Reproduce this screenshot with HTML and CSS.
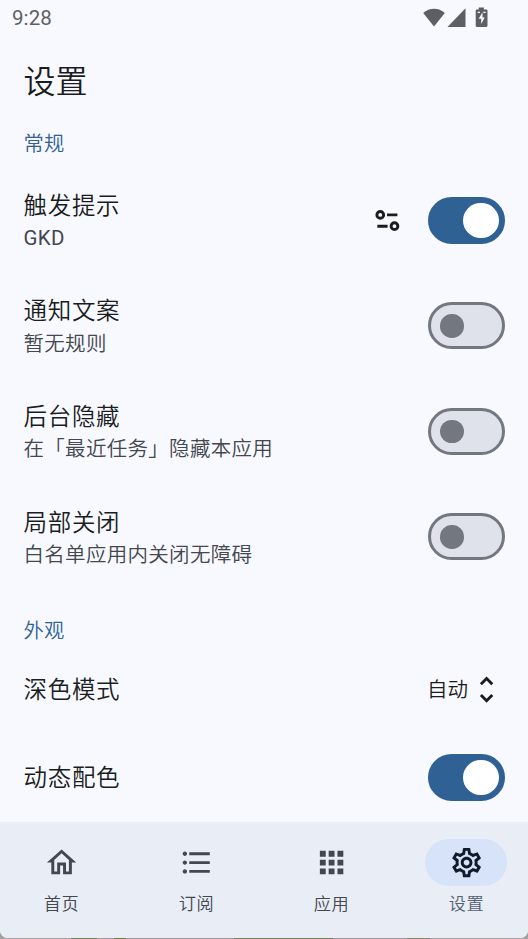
FILE: index.html
```html
<!DOCTYPE html>
<html lang="zh-CN">
<head>
<meta charset="utf-8">
<title>设置</title>
<link rel="stylesheet" href="styles.css">
</head>
<body>
<div class="screen">
  <header class="status">
    <span class="clock latin">9:28</span>
    <svg class="status-icons" viewBox="0 0 66 22" width="66" height="22">
      <path d="M.2 6C6 .2 16 .2 21.800 6L11 19.600z"/>
      <path d="M42.500 1.300v18.600H24.500z"/>
      <path d="M55.700.5h5.200v2h2.400c.7 0 1.200.5 1.200 1.200v15c0 .7-.5 1.200-1.200 1.200h-9.400c-.7 0-1.200-.5-1.200-1.200v-15c0-.7.5-1.200 1.200-1.200h1.800z"/>
      <path class="bolt" d="M54.700 4.800h2.300v1.300h-2.300zM60.300 4.800h2.300v1.300h-2.300zM59.500 5.300v5.100h2.200l-3.500 6.500v-5.100h-2.500z"/>
    </svg>
  </header>
  <h1 class="title">设置</h1>
  <main class="list">
    <h2 class="section">常规</h2>
    <div class="row">
      <div class="text"><div class="name">触发提示</div><div class="summary latin">GKD</div></div>
      <svg class="icon tune" viewBox="0 0 24 24"><g fill="none" stroke="currentColor" stroke-width="2"><circle cx="7" cy="8.100" r="2.300"/><circle cx="16.700" cy="15.800" r="2.300"/><path d="M11.600 8.100H18.700M5 15.800h7"/></g></svg>
      <div class="switch on"></div>
    </div>
    <div class="row">
      <div class="text"><div class="name">通知文案</div><div class="summary">暂无规则</div></div>
      <div class="switch"></div>
    </div>
    <div class="row">
      <div class="text"><div class="name">后台隐藏</div><div class="summary">在「最近任务」隐藏本应用</div></div>
      <div class="switch"></div>
    </div>
    <div class="row">
      <div class="text"><div class="name">局部关闭</div><div class="summary">白名单应用内关闭无障碍</div></div>
      <div class="switch"></div>
    </div>
    <h2 class="section second">外观</h2>
    <div class="row short">
      <div class="text"><div class="name">深色模式</div></div>
      <span class="value">自动</span>
      <svg class="icon" viewBox="0 0 24 24"><path d="M12 5.830 15.170 9l1.410-1.410L12 3 7.410 7.590 8.830 9 12 5.830zm0 12.340L8.830 15l-1.410 1.410L12 21l4.590-4.590L15.170 15 12 18.170z"/></svg>
    </div>
    <div class="row short">
      <div class="text"><div class="name">动态配色</div></div>
      <div class="switch on"></div>
    </div>
  </main>
  <nav class="nav">
    <div class="tab">
      <div class="pill"><svg class="icon" viewBox="0 0 24 24"><path d="m12 5.690 5 4.500V18h-2v-6H9v6H7v-7.810l5-4.500M12 3 2 12h3v8h6v-6h2v6h6v-8h3L12 3z"/></svg></div>
      <span class="label">首页</span>
    </div>
    <div class="tab">
      <div class="pill"><svg class="icon" viewBox="0 0 24 24"><path d="M4 10.500c-.83 0-1.500.67-1.500 1.500s.67 1.500 1.500 1.500 1.500-.67 1.500-1.500-.67-1.500-1.500-1.500zm0-6c-.83 0-1.500.67-1.500 1.500S3.170 7.500 4 7.500 5.500 6.830 5.500 6 4.830 4.500 4 4.500zm0 12c-.83 0-1.500.68-1.500 1.500s.68 1.500 1.500 1.500 1.500-.68 1.500-1.500-.67-1.500-1.500-1.500zM7 19h14v-2H7v2zm0-6h14v-2H7v2zm0-8v2h14V5H7z"/></svg></div>
      <span class="label">订阅</span>
    </div>
    <div class="tab">
      <div class="pill"><svg class="icon" viewBox="0 0 24 24"><path d="M4 8h4V4H4v4zm6 12h4v-4h-4v4zm-6 0h4v-4H4v4zm0-6h4v-4H4v4zm6 0h4v-4h-4v4zm6-10v4h4V4h-4zm-6 4h4V4h-4v4zm6 6h4v-4h-4v4zm0 6h4v-4h-4v4z"/></svg></div>
      <span class="label">应用</span>
    </div>
    <div class="tab active">
      <div class="pill"><svg class="icon" viewBox="0 0 24 24"><path d="M19.430 12.980c.04-.32.07-.64.07-.98 0-.34-.03-.66-.07-.98l2.110-1.650c.19-.15.24-.42.12-.64l-2-3.460c-.09-.16-.26-.25-.44-.25-.06 0-.12.01-.17.03l-2.490 1c-.52-.4-1.080-.73-1.690-.98l-.38-2.650C14.460 2.180 14.250 2 14 2h-4c-.25 0-.46.18-.49.42l-.38 2.650c-.61.25-1.170.59-1.690.98l-2.490-1c-.06-.02-.12-.03-.18-.03-.17 0-.34.09-.43.25l-2 3.460c-.13.22-.07.49.12.64l2.110 1.650c-.04.32-.07.65-.07.98 0 .33.03.66.07.98l-2.110 1.650c-.19.15-.24.42-.12.64l2 3.460c.09.16.26.25.44.25.06 0 .12-.01.17-.03l2.490-1c.52.4 1.080.73 1.690.98l.38 2.650c.03.24.24.42.49.42h4c.25 0 .46-.18.49-.42l.38-2.650c.61-.25 1.170-.59 1.690-.98l2.490 1c.06.02.12.03.18.03.17 0 .34-.09.43-.25l2-3.460c.12-.22.07-.49-.12-.64l-2.110-1.650zm-1.980-1.710c.04.31.05.52.05.73 0 .21-.02.43-.05.73l-.14 1.130.89.7 1.080.84-.7 1.210-1.270-.51-1.040-.42-.9.68c-.43.32-.84.56-1.250.73l-1.060.43-.16 1.130-.2 1.350h-1.400l-.19-1.350-.16-1.130-1.060-.43c-.43-.18-.83-.41-1.230-.71l-.91-.7-1.060.43-1.270.51-.7-1.210 1.080-.84.89-.7-.14-1.130c-.03-.31-.05-.54-.05-.74s.02-.43.05-.73l.14-1.130-.89-.7-1.080-.84.7-1.210 1.270.51 1.040.42.9-.68c.43-.32.84-.56 1.250-.73l1.060-.43.16-1.130.2-1.350h1.390l.19 1.350.16 1.130 1.060.43c.43.18.83.41 1.230.71l.91.7 1.060-.43 1.270-.51.7 1.210-1.070.85-.89.7.14 1.130zM12 8c-2.210 0-4 1.790-4 4s1.790 4 4 4 4-1.790 4-4-1.790-4-4-4zm0 6c-1.100 0-2-.9-2-2s.9-2 2-2 2 .9 2 2-.9 2-2 2z"/></svg></div>
      <span class="label">设置</span>
    </div>
  </nav>
</div>
</body>
</html>
```
FILE: styles.css
```css
* { box-sizing: border-box; }
body {
  margin: 0;
  height: 939px;
  overflow: hidden;
  background: linear-gradient(90deg, #a3a29f 0 71px, #77805c 71px 97px, #a09b9a 97px 114px, #6f7a4c 114px 126px, #a09b9a 126px 234px, #77805c 234px 333px, #a09b9a 333px 407px, #858a6c 407px 430px, #a3a29f 430px);
  font-family: Roboto, "Noto Sans CJK SC", sans-serif;
  font-weight: 350;
  color: #191c20;
}
.latin { font-weight: 400; }
.screen {
  height: 938px;
  display: flex;
  flex-direction: column;
  background: #f8f9ff;
  border-radius: 0 0 8px 8px;
  overflow: hidden;
}
.status {
  flex: none;
  height: 35px;
  padding: 1px 39px 0 12px;
  display: flex;
  align-items: center;
  justify-content: space-between;
  color: #5e5f62;
}
.clock { font-size: 20.5px; line-height: 24px; letter-spacing: .1px; }
.status-icons { fill: #5e5f62; }
.status-icons .bolt { fill: #f8f9ff; }
.title {
  flex: none;
  margin: 0;
  height: 94px;
  padding-left: 23.5px;
  font-size: 32px;
  font-weight: inherit;
  line-height: 94px;
}
.list { flex: 1; margin: 0; padding: 0 23.5px; }
.section {
  margin: 0;
  height: 38.4px;
  font-size: 20.3px;
  font-weight: inherit;
  line-height: 31px;
  letter-spacing: .15px;
  color: #2f6195;
}
.section.second { height: 55.9px; padding-top: 26px; }
.row { height: 105.6px; display: flex; align-items: center; }
.row.short { height: 88px; }
.text { flex: 1; padding-top: 1.8px; }
.name { font-size: 23.5px; line-height: 35.2px; letter-spacing: .7px; }
.summary { font-size: 20.5px; line-height: 29.3px; letter-spacing: .3px; color: #43474e; }
.value { margin-right: 1px; padding-bottom: 3px; font-size: 20.5px; letter-spacing: .2px; }
.icon { display: block; width: 35.2px; height: 35.2px; fill: currentColor; }
.icon.tune { margin-right: 23px; }
.switch {
  width: 76.3px;
  height: 47px;
  padding: 0 9px;
  display: flex;
  align-items: center;
  border: 3px solid #73777f;
  border-radius: 24px;
  background: #dfe2eb;
}
.switch::before { content: ""; width: 23.5px; height: 23.5px; border-radius: 50%; background: #73777f; }
.switch.on { justify-content: flex-end; padding: 0 3px; border-color: #2f6195; background: #2f6195; }
.switch.on::before { width: 35.2px; height: 35.2px; background: #fff; }
.nav {
  flex: none;
  height: 116px;
  padding: 17px 20.6px 0 20.4px;
  display: flex;
  justify-content: space-between;
  background: #e9edf6;
  color: #43474e;
}
.tab { width: 82px; display: flex; flex-direction: column; align-items: center; }
.pill { width: 82px; height: 47px; display: flex; align-items: center; justify-content: center; border-radius: 24px; }
.label { margin-top: 7px; font-size: 17.2px; line-height: 23.5px; letter-spacing: .5px; }
.active .pill { background: #d7e3f8; color: #101c2b; }
.active .label { color: #535f70; }
```
